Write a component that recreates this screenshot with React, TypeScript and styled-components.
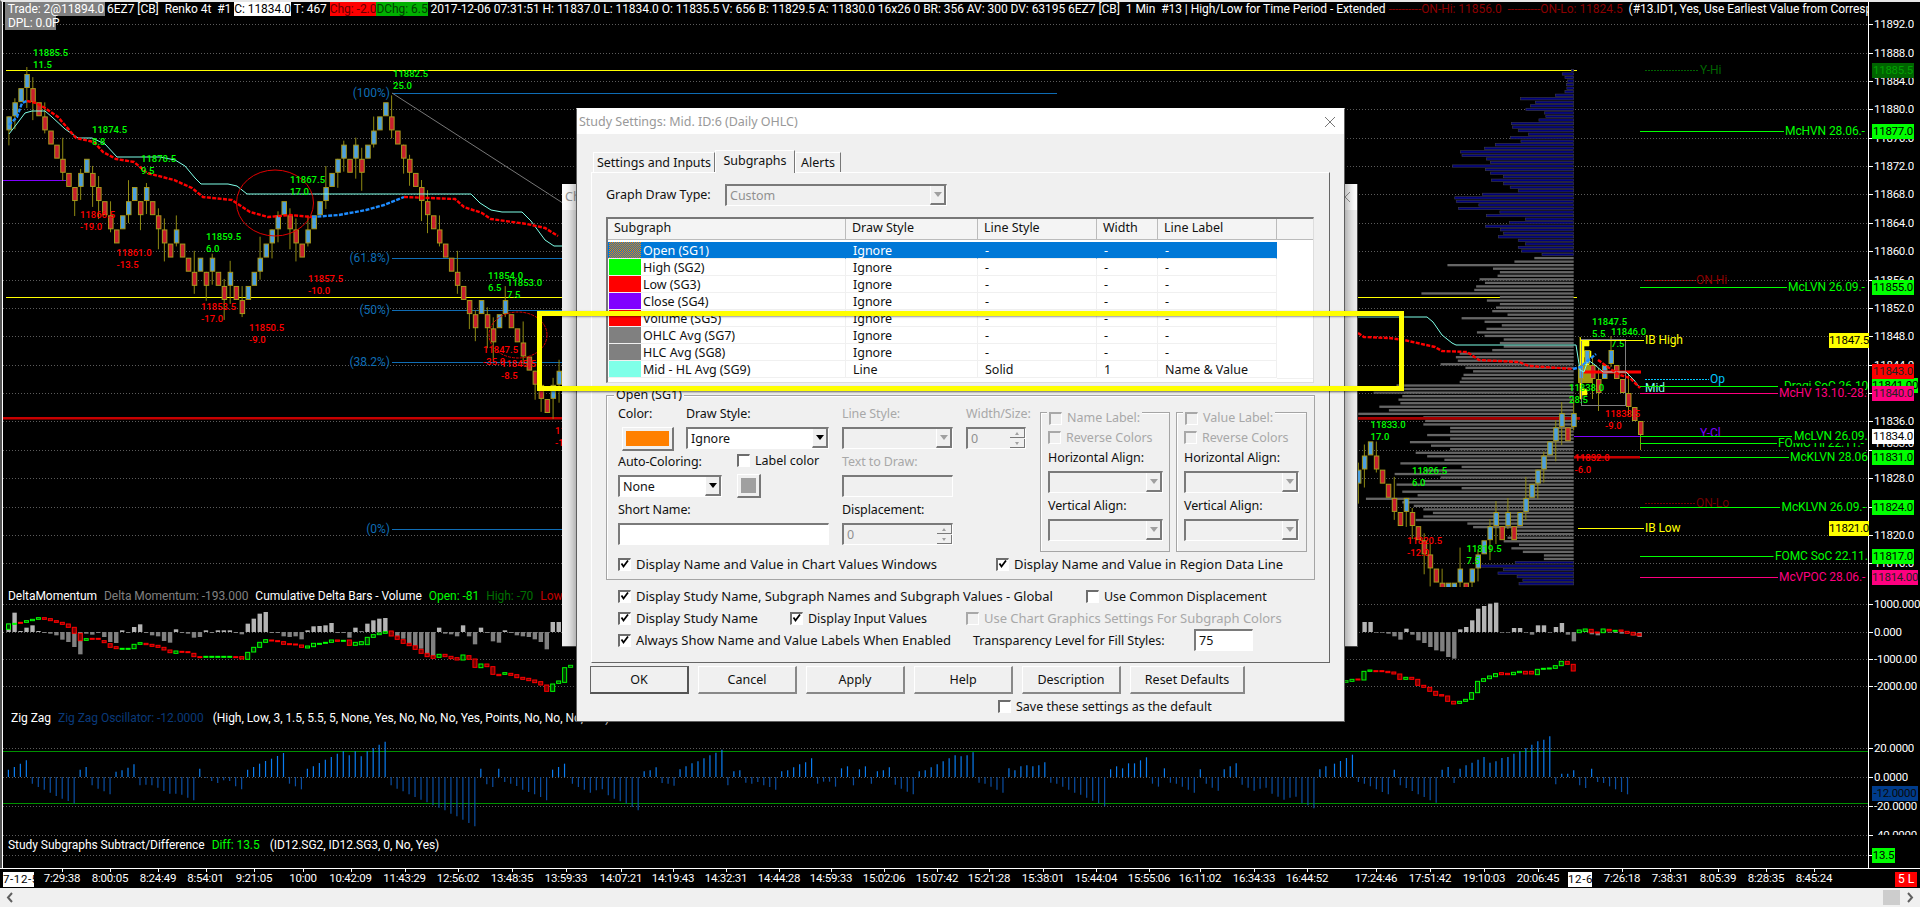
import React from "react";
import styled, { createGlobalStyle } from "styled-components";

const Global = createGlobalStyle`
  html, body { margin: 0; padding: 0; background: #000; overflow: hidden; }
`;

const CHART_FONT = `"Roboto", "Liberation Sans", sans-serif`;
const UI_FONT = `"Noto Sans", "Liberation Sans", sans-serif`;

const Page = styled.div`
  position: relative; width: 1920px; height: 907px; background: #000; overflow: hidden;
  display: flex; flex-direction: column; font-family: ${CHART_FONT}; color: #fff;
`;
const ChartRow = styled.div`
  display: flex; height: 868px; border-top: 2px solid #e6e6e6; box-sizing: border-box;
  border-left: 2px solid #555; background: #000;
`;
const Plot = styled.div`
  width: 1866px; border-left: 1px solid #fff; box-sizing: border-box; display: flex; flex-direction: column; overflow: hidden;
`;
const Pane = styled.section<{ $h: number }>`
  position: relative; height: ${(p) => p.$h}px; flex: none; overflow: hidden;
`;
const Canvas = styled.svg`
  position: absolute; left: 0; top: 0; display: block;
`;
const HeadLine = styled.div<{ $pad: number; $top: number }>`
  position: relative; display: flex; white-space: pre; height: 14px; line-height: 14px; font-size: 12px;
  padding-left: ${(p) => p.$pad}px; margin-top: ${(p) => p.$top}px; letter-spacing: -0.04px;
`;
const Seg = styled.span<{ $c?: string; $bg?: string; $ml?: number; $w?: number }>`
  flex: none; color: ${(p) => p.$c || "#fff"}; background: ${(p) => p.$bg || "transparent"};
  margin-left: ${(p) => p.$ml || 0}px; ${(p) => (p.$w ? `width: ${p.$w}px;` : "")}
`;
const AxisColumn = styled.div`
  position: relative; width: 52px; flex: none; border-left: 1px solid #fff; box-sizing: border-box; background: #000;
`;
const AxisText = styled.div<{ $clip?: boolean }>`
  position: absolute; left: 5px; height: ${(p) => (p.$clip ? 7 : 14)}px; overflow: hidden; line-height: 14px;
  font-size: 11.5px; letter-spacing: -0.25px; white-space: nowrap;
`;
const AxisTick = styled.i`
  position: absolute; left: 0; width: 4px; height: 1px; background: #fff;
`;
const AxisTag = styled.div<{ $bg: string; $fg: string; $left: number; $w: number }>`
  position: absolute; left: ${(p) => p.$left}px; width: ${(p) => p.$w}px; height: 15px; line-height: 15px; box-sizing: border-box;
  background: ${(p) => p.$bg}; color: ${(p) => p.$fg}; font-size: 11.5px; letter-spacing: -0.25px; text-align: center; white-space: nowrap; overflow: hidden;
`;
const TimeAxis = styled.div`
  position: relative; height: 20px; flex: none; box-sizing: border-box; border-top: 1px solid #fff; background: #000;
`;
const TimeTick = styled.i`
  position: absolute; top: 0; width: 1px; height: 3px; background: #fff;
`;
const TimeLabel = styled.span`
  position: absolute; top: 2px; line-height: 15px; transform: translateX(-50%); font-size: 11.5px; letter-spacing: -0.2px; white-space: nowrap;
`;
const DateTag = styled.span<{ $w: number }>`
  position: absolute; top: 3px; height: 15px; width: ${(p) => p.$w}px; line-height: 15px; background: #fff; color: #000; font-size: 11.5px; letter-spacing: 0.6px; text-align: center; white-space: nowrap;
`;
const StatusTag = styled.span`
  position: absolute; top: 3px; left: 1895px; width: 22px; height: 15px; line-height: 15px; background: #f00; color: #fff; font-size: 12px; text-align: center;
`;
const ScrollBar = styled.div`
  height: 19px; flex: none; background: #f0f0f0; display: flex; align-items: center; justify-content: space-between; padding: 0 6px 0 6px;
`;
const ScrollEnd = styled.div`
  display: flex; align-items: center; gap: 6px;
`;
const ScrollThumb = styled.div`
  width: 17px; height: 15px; background: #cdcdcd;
`;

const BackDialog = styled.div`
  position: absolute; left: 562px; top: 184px; width: 796px; height: 463px; background: #f0f0f0;
  border: 1px solid #4a4a4a; border-width: 0 1px 1px 0; box-sizing: border-box; font-family: ${UI_FONT};
`;
const BackTitle = styled.div`
  height: 26px; background: #fff; color: #999; font-size: 12.5px; line-height: 26px; padding-left: 3px;
  display: flex; justify-content: space-between; align-items: center; padding-right: 6px;
`;
const Dialog = styled.div`
  position: absolute; left: 576px; top: 108px; width: 769px; height: 614px; box-sizing: border-box; background: #f0f0f0;
  border: 1px solid #5f5f5f; border-top: 1px solid #fff; box-shadow: 0 0 12px rgba(0, 0, 0, 0.5);
  font-family: ${UI_FONT}; font-size: 12.5px; color: #111; letter-spacing: -0.02px;
  display: flex; flex-direction: column;
`;
const TitleBar = styled.div`
  height: 25px; flex: none; background: #fff; color: #999; display: flex; align-items: center; justify-content: space-between;
  padding: 0 8px 0 2px; font-size: 12.5px;
`;
const Tabs = styled.div`
  display: flex; align-items: flex-end; margin: 15px 0 0 16px; height: 23px; flex: none; position: relative;
`;
const Tab = styled.div<{ $active?: boolean; $w: number }>`
  width: ${(p) => p.$w}px; height: ${(p) => (p.$active ? 23 : 20)}px; box-sizing: border-box; text-align: center;
  line-height: ${(p) => (p.$active ? 20 : 19)}px; border: 1px solid #fff; border-bottom: none; border-right: 1px solid #777;
  background: #f0f0f0; position: relative; margin-bottom: ${(p) => (p.$active ? -1 : 0)}px; z-index: ${(p) => (p.$active ? 2 : 0)};
`;
const TabPanel = styled.div`
  margin-left: 14px; width: 739px; height: 491px; flex: none; box-sizing: border-box; border: 1px solid #fff; border-right: 1px solid #666; border-bottom: 1px solid #666;
  padding: 10px 0 0 14px; display: flex; flex-direction: column;
`;
const TypeRow = styled.div`
  display: flex; align-items: center; height: 23px; gap: 7px;
`;
const TypeLabel = styled.span`
  width: 112px;
`;
const COLS = "238px 132px 119px 61px 119px 1fr";
const List = styled.div`
  margin-top: 11px; width: 708px; height: 166px; flex: none; background: #fff; box-sizing: border-box;
  border: 1px solid #777; border-top-width: 2px; border-left-width: 2px; border-right-color: #ddd; border-bottom-color: #ddd;
`;
const ListHead = styled.div`
  display: grid; grid-template-columns: ${COLS}; height: 20px; background: #f4f4f4; border-bottom: 1px solid #bbb;
`;
const HeadCell = styled.div`
  line-height: 18px; padding-left: 6px; border-right: 1px solid #bbb; box-sizing: border-box;
  &:last-child { border-right: 0; }
`;
const ListBody = styled.div`
  padding-top: 2px;
`;
const ListRow = styled.div`
  display: grid; grid-template-columns: ${COLS}; height: 17px;
`;
const ListCell = styled.div<{ $sel?: boolean; $first?: boolean }>`
  display: flex; align-items: center; height: 17px; box-sizing: border-box; overflow: hidden; white-space: nowrap;
  padding-left: ${(p) => (p.$first ? 1 : 7)}px; background: ${(p) => (p.$sel ? "#0078d7" : "#fff")}; color: ${(p) => (p.$sel ? "#fff" : "#111")};
  border-bottom: 1px solid #f0f0f0; border-right: 1px solid ${(p) => (p.$sel ? "#0078d7" : "#f0f0f0")};
`;
const Swatch = styled.span<{ $c: string; $dither?: boolean }>`
  width: 32px; height: 16px; margin-right: 2px; flex: none;
  background: ${(p) => (p.$dither ? "repeating-conic-gradient(#ff8000 0 25%, #0078d7 0 50%) 0 0 / 2px 2px" : p.$c)};
`;
const TrailCell = styled.div`
  height: 17px; background: #fff; border-bottom: 1px solid #f0f0f0;
`;
const Group = styled.div`
  position: relative; margin-top: 12px; width: 709px; height: 185px; flex: none; box-sizing: border-box;
  border: 1px solid #a5a5a5; box-shadow: inset 1px 1px 0 #fff; padding: 8px 0 0 11px;
`;
const Legend = styled.span<{ $left: number; $top: number; $dim?: boolean }>`
  position: absolute; left: ${(p) => p.$left}px; top: ${(p) => p.$top}px; background: #f0f0f0; padding: 0 2px; line-height: 14px; height: 14px;
  display: flex; align-items: center; gap: 5px; color: ${(p) => (p.$dim ? "#a8a8a8" : "#111")}; white-space: nowrap;
`;
const GroupTop = styled.div`
  display: flex; height: 149px;
`;
const Col = styled.div<{ $w: number; $ml?: number }>`
  width: ${(p) => p.$w}px; margin-left: ${(p) => p.$ml || 0}px; flex: none; display: flex; flex-direction: column;
`;
const FieldRow = styled.div`
  display: flex; height: 48px;
`;
const Field = styled.div<{ $w: number; $ml?: number }>`
  width: ${(p) => p.$w}px; margin-left: ${(p) => p.$ml || 0}px; flex: none; display: flex; flex-direction: column; height: 48px;
`;
const FieldLabel = styled.div<{ $dim?: boolean }>`
  height: 20px; line-height: 20px; margin-bottom: 3px; color: ${(p) => (p.$dim ? "#a8a8a8" : "#111")}; white-space: nowrap; letter-spacing: -0.1px;
`;
const Sunken = styled.div<{ $dim?: boolean }>`
  height: 22px; box-sizing: border-box; position: relative; display: flex; align-items: center; padding-left: 3px;
  background: ${(p) => (p.$dim ? "#f0f0f0" : "#fff")}; color: ${(p) => (p.$dim ? "#909090" : "#111")};
  border: 1px solid #fff; border-top: 2px solid #7a7a7a; border-left: 2px solid #7a7a7a;
`;
const DropBtn = styled.div<{ $dim?: boolean }>`
  position: absolute; right: 0; top: 0; bottom: 0; width: 16px; background: #f0f0f0; box-sizing: border-box;
  border-left: 1px solid #fff; border-right: 2px solid #7a7a7a; border-bottom: 2px solid #7a7a7a; display: flex; align-items: center; justify-content: center;
  &::after { content: ""; border: 4px solid transparent; border-top: 5px solid ${(p) => (p.$dim ? "#a0a0a0" : "#000")}; border-bottom: 0; }
`;
const SpinBtns = styled.div`
  position: absolute; right: 0; top: 0; bottom: 0; width: 15px; display: flex; flex-direction: column; gap: 1px; box-sizing: border-box;
`;
const SpinBtn = styled.div<{ $up?: boolean }>`
  flex: 1; background: #f0f0f0; border-right: 1px solid #7a7a7a; border-bottom: 1px solid #7a7a7a; display: flex; align-items: center; justify-content: center;
  &::after { content: ""; border: 2px solid transparent; ${(p) => (p.$up ? "border-bottom: 3px solid #a0a0a0; border-top: 0;" : "border-top: 3px solid #a0a0a0; border-bottom: 0;")} }
`;
const ColorBtn = styled.div<{ $w: number; $h: number; $mt: number; $ml: number; $c: string; $px: number; $py: number }>`
  width: ${(p) => p.$w}px; height: ${(p) => p.$h}px; margin-top: ${(p) => p.$mt}px; margin-left: ${(p) => p.$ml}px; box-sizing: border-box; flex: none;
  border: 1px solid #fff; border-right: 2px solid #777; border-bottom: 2px solid #777; padding: ${(p) => `${p.$py}px ${p.$px}px`};
  &::before { content: ""; display: block; width: 100%; height: 100%; background: ${(p) => p.$c}; }
`;
const CheckRow = styled.label<{ $w?: number; $dim?: boolean; $ml?: number; $big?: boolean }>`
  display: flex; align-items: center; gap: 5px; white-space: nowrap; flex: none; ${(p) => (p.$w ? `width: ${p.$w}px;` : "")}
  margin-left: ${(p) => p.$ml || 0}px; color: ${(p) => (p.$dim ? "#a8a8a8" : "#111")}; font-size: ${(p) => (p.$big ? 13 : 12.5)}px;
`;
const Box = styled.span<{ $dim?: boolean }>`
  width: 13px; height: 13px; box-sizing: border-box; flex: none; display: block; background: ${(p) => (p.$dim ? "#f0f0f0" : "#fff")};
  border-top: 2px solid ${(p) => (p.$dim ? "#a8a8a8" : "#6d6d6d")}; border-left: 2px solid ${(p) => (p.$dim ? "#a8a8a8" : "#6d6d6d")};
  border-right: 1px solid #fff; border-bottom: 1px solid #fff;
`;
const LabelBox = styled.div<{ $w: number; $ml: number }>`
  position: relative; width: ${(p) => p.$w}px; margin-left: ${(p) => p.$ml}px; margin-top: 8px; height: 140px; box-sizing: border-box; flex: none;
  border: 1px solid #a5a5a5; box-shadow: inset 1px 1px 0 #fff; padding: 17px 0 0 7px;
`;
const BoxCheck = styled.div`
  height: 15px; display: flex; align-items: center; margin-bottom: 2px;
`;
const BoxField = styled.div`
  margin-top: 3px; width: 115px;
`;
const GroupFoot = styled.div`
  display: flex; height: 20px; align-items: center; margin-top: 1px;
`;
const Options = styled.div`
  padding: 5px 0 0 12px; display: flex; flex-direction: column;
`;
const OptionRow = styled.div`
  display: flex; align-items: center; height: 22px;
`;
const InputBox = styled(Sunken)`
  width: 59px;
`;
const PlainText = styled.span<{ $w: number }>`
  width: ${(p) => p.$w}px; flex: none; white-space: nowrap;
`;
const ButtonRow = styled.div`
  display: flex; margin: 3px 0 0 13px; gap: 9px; flex: none;
`;
const Btn = styled.div<{ $w: number; $main?: boolean }>`
  width: ${(p) => p.$w}px; height: 28px; box-sizing: border-box; text-align: center; line-height: 25px;
  border: 1px solid ${(p) => (p.$main ? "#666" : "#fff")}; border-right: 2px solid ${(p) => (p.$main ? "#555" : "#888")}; border-bottom: 2px solid ${(p) => (p.$main ? "#555" : "#888")};
`;
const SaveRow = styled.div`
  margin: 4px 0 0 421px; height: 16px; display: flex; align-items: center; flex: none;
`;
const Highlight = styled.div`
  position: absolute; left: 537px; top: 311px; width: 867px; height: 80px; box-sizing: border-box; border: 5px solid #ffff00;
  box-shadow: 0 1px 2px rgba(0, 0, 0, 0.6), inset 0 1px 2px rgba(0, 0, 0, 0.4);
`;

const ChartLabel = styled.text`
  font-family: ${CHART_FONT}; font-size: 9.5px; font-weight: 500; dominant-baseline: central;
`;
const FibLabel = styled.text`
  font-family: ${CHART_FONT}; font-size: 12px; dominant-baseline: central; text-anchor: end; fill: #0f6db5;
`;
const LineLabel = styled.text`
  font-family: ${CHART_FONT}; font-size: 12px; letter-spacing: -0.1px; dominant-baseline: central;
`;

const W = 1866;
const bars: number[] = [3,2,1,0,1,2,3,4,5,6,7,8,7,6,7,8,9,10,11,10,9,8,9,8,9,10,11,12,11,12,13,14,13,14,13,14,15,14,15,16,15,14,13,12,11,10,9,10,11,12,11,10,9,8,7,6,5,6,5,6,5,4,3,2,3,4,5,6,7,8,9,10,11,12,13,14,15,16,17,16,17,18,17,16,17,18,19,20,21,22,23,22,21];
const barsR: number[] = [28,27,26,27,28,29,30,31,30,31,32,33,34,35,36,36,36,35,36,35,34,33,32,31,32,31,32,31,30,29,28,27,26,25,24,25,24];
const kY = (k: number) => 74 + 14.13 * k;
const cluster: [number, number, boolean][] = [
  [1581, 365, true],[1587, 350, true],[1592.5, 365, false],[1598.5, 379, false],[1604.5, 365, true],[1611, 350, true],
  [1616.5, 365, false],[1622.5, 379, false],[1628.5, 393, false],[1634.5, 407, false],[1640.5, 421, false],
];
const profA = [657,633,640,647,644,645,640,615,524,563,550,538,587,590,572,500,503,518,545,498,525,458,430,367,371,435,445,346,432,445,480,448,480,497,518,424,352,356,415,362,470,435,537,495,432,472,480,466,518,537,518,527,580,560,508,333,452,470,464,417,431,408,403,265,470];
const profB = [436,470,460,450,490,370,430,475,435,410,430,480,470,480,450,365,355,360,315,380,400,375,370,365,200,190,140,215,205,210,155,180,100,270,275,270,340,340,280,340,235,290,340,250,280,325,210,370,275,195,315,270,200,370,215,255,120,215,245,270,295,270,250,385,400,500,510,490,480,520,500,530,585,585,510,420,480,465,515,530,520];

const histL = [25,58,3,13,20,3,-3,-5,-10,-23,-30,-45,-67,-5,-8,-3,-15,-30,-33,5,-3,15,23,-3,-10,-13,-27,-32,8,-3,-5,-17,-15,5,-3,5,5,5,-3,-7,25,40,55,60,-3,-3,-13,-15,-13,-22,5,17,18,20,27,-3,-3,-17,13,2,25,35,40,42,-3,-13,-20,-35,-48,-50,-73,-75,13,-5,-7,-13,20,-13,-37,13,-3,-28,-32,5,-3,-10,-13,-15,-22,-30,-52,30,30];
const histR = [30,30,-2,-2,-5,-13,-23,10,-8,-25,-33,-45,-55,-58,-75,-80,8,15,35,70,78,85,88,-2,-2,12,12,-2,-8,20,20,-2,15,27,-8,-28,3,5,-7,-10,5,-2,-3,-5,-3,-10,-15];
type C = [number, number, number];
const candL: C[] = [[72,88,1],[70,73,1],[67,68,0],[62,67,1],[58,62,1],[53,58,1],[53,58,0],[56,62,0],[62,67,0],[67,73,0],[72,82,0],[82,100,0],[100,122,0],[116,121,1],[115,117,0],[115,118,0],[122,128,0],[131,142,0],[140,146,0],[145,146,1],[145,146,1],[133,146,1],[128,133,1],[130,134,0],[133,139,0],[136,142,0],[142,150,0],[150,158,0],[153,160,1],[154,156,0],[155,158,0],[160,170,0],[170,172,0],[169,170,1],[169,170,1],[169,170,1],[169,171,1],[169,170,1],[170,171,0],[170,177,0],[157,178,1],[142,156,1],[127,142,1],[119,127,1],[120,122,0],[122,124,0],[125,133,0],[131,133,0],[132,135,0],[135,142,0],[138,144,1],[130,140,1],[130,132,1],[127,130,1],[120,127,1],[120,124,0],[121,123,1],[120,136,0],[127,136,1],[125,134,1],[112,134,1],[104,112,1],[99,104,1],[95,100,1],[93,108,0],[108,118,0],[119,130,0],[130,137,0],[137,148,0],[148,160,0],[160,170,0],[167,175,0],[163,172,1],[163,170,0],[169,176,0],[173,180,0],[165,180,1],[167,178,0],[177,202,0],[192,203,1],[192,200,0],[200,223,0],[223,227,0],[218,223,1],[220,226,0],[224,233,0],[232,238,0],[235,242,0],[240,248,0],[245,255,0],[255,274,0],[252,274,1],[243,250,1],[203,247,1],[196,202,1]];
const candR: C[] = [[242,247,1],[238,244,1],[237,240,0],[214,240,1],[210,214,1],[212,214,0],[212,214,0],[214,218,0],[216,222,0],[222,238,0],[232,238,1],[232,238,0],[238,256,0],[256,262,0],[262,274,0],[274,286,0],[284,288,0],[288,304,0],[304,312,0],[304,310,1],[298,304,1],[278,298,1],[244,278,1],[236,244,1],[228,236,1],[221,230,1],[218,224,0],[220,224,0],[217,224,1],[214,218,1],[214,222,0],[214,222,0],[208,224,1],[205,208,1],[204,206,1],[197,205,1],[184,197,1],[184,193,0],[193,213,0],[90,98,1],[87,94,1],[88,98,0],[96,98,0],[87,98,1],[88,93,0],[91,94,1],[90,94,0],[94,100,0],[97,105,0],[101,107,0]];
const zzL = [22,30,40,50,-20,-30,-38,-47,-57,-65,-72,-80,22,30,-25,-35,-43,-52,16,20,28,38,-25,-23,-25,-32,-42,-50,-50,-53,-62,-70,25,-3,-12,-18,-10,-12,-28,-37,22,30,40,48,55,63,72,-20,-28,-37,25,32,42,52,60,70,77,65,77,62,77,87,97,106,-25,-35,-43,-52,-60,-68,-76,-85,-92,-100,-110,-118,-128,-138,-148,25,-22,-30,25,-15,-20,-27,-38,-45,-52,-60,-70,22,30,40];
const zzM = [-20,-30,-38,-47,-40,-37,-55,-65,-73,-80,-90,-100,17,20,29,-18,-20,-26,23,32,41,47,56,65,73,82,-25,17,20,-17,-20,-15,-25,-30,-38,17,20,29,38,44,56,-20,-14,-14,-29,26,32,-25,23,32,-20,17,20,29,-23,-35,-44,-52,17,20,29,38,47,56,65,62,65,74,-17,-20,-29,-38,-47,26,20,32,35,32,35,44,-17,-20,-29,-38,-47,-53,-62,-71,-79,-88,23,32,26,41,41,50,59,-20,-29,26,-17,-20,-29,-38,-47,23,-20,-32,-41,23,32,41,-23,-32,-41,-35,-32,-50,-59,-68,-62,-59,-79,-85,-94,23,32];
const zzR = [40,48,57,67,-15,-20,-28,-37,-45,-52,22,-25,-33,-42,-52,-60,-70,-77,22,30,-18,25,35,43,52,60,43,47,57,60,70,77,87,97,107,112,122,-22,10,10,20,-25,-33,25,-15,-18,-28,-37,-45,-52];

const pts = (a: number[][]) => a.map((p) => p.join(",")).join(" ");
const cyanL = [[9,134],[16,125],[25,113],[32,111],[45,111],[52,117],[65,129],[78,138],[92,138],[105,144],[117,157],[160,157],[175,160],[185,166],[195,178],[201,184],[228,184],[237,186],[247,194],[471,194],[480,203],[491,210],[502,212],[522,212],[531,221],[545,240],[554,246],[562,246]];
const cyanR = [[1358,317],[1427,317],[1433,322],[1442,335],[1452,343],[1456,345],[1576,345],[1580,370],[1584,372],[1588,360],[1595,365],[1603,372],[1626,372],[1634,380],[1640,388]];
const maBlue0 = [[9,125],[17,117],[22,103],[27,101]];
const maRed1 = [[27,101],[36,103],[45,108],[58,117],[76,138],[94,142],[103,152],[116,159],[134,162],[147,173],[174,180],[192,188],[203,197],[232,200],[250,212],[268,217],[290,215],[312,217]];
const maBlue1 = [[312,217],[339,215],[366,210],[384,205],[404,197]];
const maRed2 = [[404,197],[455,199],[464,207],[482,213],[491,219],[527,224],[545,228],[558,236]];
const maRed3 = [[1358,333],[1364,337],[1389,338],[1404,340],[1435,347],[1442,351],[1467,352],[1479,360],[1519,362],[1529,366],[1573,369]];
const maBlue3 = [[1573,369],[1581,367],[1586,362],[1596,354]];
const maRed4 = [[1598,360],[1612,370],[1620,375],[1630,378],[1640,388]];

const GridLines = ({ ys }: { ys: number[] }) => (
  <g stroke="#5c5c5c" strokeDasharray="1 2">
    {ys.map((y) => (
      <line key={y} x1={3} x2={1868} y1={y + 0.5} y2={y + 0.5} />
    ))}
  </g>
);

const Wick = ({ i, x, top }: { i: number; x: number; top: number }) => {
  const h = (i * 37) % 11;
  if (h > 5) return null;
  const up = (h * 7) % 24;
  const dn = ((h + 3) * 5) % 22;
  return <line x1={x} x2={x} y1={top - up} y2={top + 14 + dn} stroke="#8f8a12" />;
};
const Brick = ({ x, top, up }: { x: number; top: number; up: boolean }) => (
  <rect x={x - 2} y={top + 0.5} width={4.5} height={13} fill={up ? "#4a9fe0" : "#c81e2e"} stroke="#a89a1c" />
);

const G = "#00ff00";
const R = "#ff0000";
const pairs: [number, number, string, string, string][] = [
  [33,52,"11885.5","11.5",G],[92,129,"11874.5","8.8",G],[141,158,"11870.5","9.5",G],[290,179,"11867.5","17.0",G],
  [206,236,"11859.5","6.0",G],[393,73,"11882.5","25.0",G],[488,275,"11854.0","6.5",G],[507,282,"11853.0","7.5",G],
  [80,214,"11866.5","-19.0",R],[116.5,252,"11861.0","-13.5",R],[308,278,"11857.5","-10.0",R],[201,306,"11853.5","-17.0",R],
  [249,327,"11850.5","-9.0",R],[483,349,"11847.5","-35.0",R],[501,363,"11845.5","-8.5",R],[555,430,"11843.0","-12.0",R],
  [1592,321,"11847.5","5.5",G],[1611,331,"11846.0","7.5",G],[1569,387,"11838.0","28.5",G],[1605,413,"11838.5","-9.0",R],
  [1574.5,457,"11832.0","-6.0",R],[1370.5,424,"11833.0","17.0",G],[1412,470,"11826.5","6.0",G],[1407,540,"11820.5","-12.0",R],[1466.5,548,"11819.5","7.5",G],
];
const fibs: [number, string][] = [[93,"(100%)"],[258,"(61.8%)"],[310,"(50%)"],[362,"(38.2%)"],[529,"(0%)"]];
type LL = [number, number, number, string, string, number];
const levelLines: LL[] = [
  [131,1784,1785,"McHVN 28.06.-",G,0],[287,1787,1788,"McLVN 26.09.-",G,0],[386,1778,1784,"Dragi SoC 26.10.-",G,0],
  [443,1777,1778,"FOMC Hi 22.11.-",G,0],[393,1778,1779,"McHV 13.10.-28.","#ff0080",1],[436,1792,1794,"McLVN 26.09.",G,1],
  [457,1789,1790,"McKLVN 28.06",G,1],[507,1780,1781.5,"McKLVN 26.09.-",G,1],[556,1773.5,1775,"FOMC SoC 22.11.",G,1],[577,1778,1779,"McVPOC 28.06.-","#ff0080",1],
];
const dashLevels: [number, number, string, string][] = [
  [70,1699,"Y-Hi","#006400"],[280,1695,"ON-Hi","#8b0000"],[503,1695,"ON-Lo","#700000"],[379,1709,"Op","#00c8ff"],
];

const MainChart = () => (
  <Canvas width={W} height={585} viewBox={`3 2 ${W} 585`}>
    <GridLines ys={[24,53,81,109,138,166,194,223,251,280,308,336,365,393,421,450,478,507,535,563]} />
    <line x1={6} x2={1577} y1={70.5} y2={70.5} stroke="#ffff00" />
    <line x1={6} x2={1577} y1={297.5} y2={297.5} stroke="#ffff00" />
    {profA.concat(profB).map((v, i) => {
      const y = 69.3 + i * 3.54;
      const x = 1320 + v / 2.613;
      const blue = i < 53 || y >= 558;
      return <rect key={i} x={x} y={y} width={1573.7 - x} height={2.3} fill={blue ? "#00007c" : "#666"} stroke={blue ? "#3c3c4c" : "none"} strokeWidth={0.6} />;
    })}
    <line x1={3} x2={66} y1={180.5} y2={180.5} stroke="#8000ff" />
    <rect x={3} y={417} width={1577} height={2.5} fill="#c80000" />
    <rect x={1358} y={417} width={222} height={2.5} fill="#a80000" />
    <line x1={1574} x2={1640} y1={436.5} y2={436.5} stroke="#8000ff" />
    <rect x={1574} y={456} width={66} height={2.5} fill="#c80000" />
    {fibs.map(([y, t]) => (
      <g key={t}>
        <line x1={392} x2={1057} y1={y + 0.5} y2={y + 0.5} stroke="#0f6db5" />
        <FibLabel x={390} y={y}>{t}</FibLabel>
      </g>
    ))}
    <line x1={392} y1={93} x2={760} y2={330} stroke="#777" />
    {bars.map((k, i) => (
      <Wick key={i} i={i} x={8.9 + 5.98 * i} top={kY(k)} />
    ))}
    {barsR.map((k, i) => (
      <Wick key={i} i={i + 3} x={1358.4 + 5.98 * i} top={kY(k)} />
    ))}
    {cluster.map(([x, y], i) => (
      <Wick key={i} i={i + 1} x={x} top={y} />
    ))}
    {bars.map((k, i) => (
      <Brick key={i} x={8.9 + 5.98 * i} top={kY(k)} up={i === 0 || k < bars[i - 1]} />
    ))}
    {barsR.map((k, i) => (
      <Brick key={i} x={1358.4 + 5.98 * i} top={kY(k)} up={i === 0 || k <= barsR[i - 1]} />
    ))}
    <path d="M1581 340h8v6h-5v5h7v6h-7v7h5v6h-6v6h6v5h-7v8h5v6h-5v4h-2v-62z" fill="#ffff00" stroke="#ffff00" strokeWidth={0.6} />
    <rect x={1578} y={365} width={14} height={18} fill="#a09a10" />
    {cluster.map(([x, y, up], i) => (
      <Brick key={i} x={x} top={y} up={up} />
    ))}
    <rect x={1581.5} y={339.5} width={44} height={66} fill="none" stroke="#808080" />
    <rect x={1584} y={370.5} width={57} height={3} fill="#ff0000" />
    <polyline points={pts(cyanL)} fill="none" stroke="#7fffe8" />
    <polyline points={pts(cyanR)} fill="none" stroke="#7fffe8" />
    <g fill="none" strokeWidth={2.4} strokeDasharray="4 1.4">
      <polyline points={pts(maBlue0)} stroke="#1e8cff" />
      <polyline points={pts(maRed1)} stroke="#f00" />
      <polyline points={pts(maBlue1)} stroke="#1e8cff" />
      <polyline points={pts(maRed2)} stroke="#f00" />
      <polyline points={pts(maRed3)} stroke="#f00" />
      <polyline points={pts(maBlue3)} stroke="#1e8cff" />
      <polyline points={pts(maRed4)} stroke="#f00" />
    </g>
    <ellipse cx={275} cy={203} rx={38.5} ry={33} fill="none" stroke="#e00000" />
    <ellipse cx={518} cy={335} rx={29} ry={23} fill="none" stroke="#e00000" strokeDasharray="3 1" />
    {pairs.map(([x, y, a, b, c]) => (
      <g key={a + x} fill={c}>
        <ChartLabel x={x} y={y}>{a}</ChartLabel>
        <ChartLabel x={x} y={y + 12}>{b}</ChartLabel>
      </g>
    ))}
    <line x1={1578} x2={1644} y1={528.5} y2={528.5} stroke="#ffff00" />
    <line x1={1580} x2={1644} y1={340.5} y2={340.5} stroke="#ffff00" />
    <LineLabel x={1645} y={340} fill="#ffff00">IB High</LineLabel>
    <LineLabel x={1645} y={528} fill="#ffff00">IB Low</LineLabel>
    <LineLabel x={1645} y={388} fill="#7fffe8">Mid</LineLabel>
    <line x1={1645} x2={1699} y1={436.5} y2={436.5} stroke="#8000ff" strokeDasharray="2 1" />
    <LineLabel x={1700} y={433} fill="#7a00ff">Y-Cl</LineLabel>
    {dashLevels.map(([y, x2, t, c]) => (
      <g key={t}>
        <line x1={1645} x2={x2} y1={y + 0.5} y2={y + 0.5} stroke={c} strokeDasharray="2 1" />
        <LineLabel x={x2 + 1} y={y} fill={c}>{t}</LineLabel>
      </g>
    ))}
    {levelLines.map(([y, x2, tx, t, c, bg]) => (
      <g key={t}>
        <line x1={1640} x2={x2} y1={y + 0.5} y2={y + 0.5} stroke={c} />
        {bg ? <rect x={tx - 1} y={y - 7} width={1866 - tx} height={14} fill="#000" /> : null}
        <LineLabel x={tx} y={y} fill={c}>{t}</LineLabel>
      </g>
    ))}
  </Canvas>
);

const DeltaChart = () => (
  <Canvas width={W} height={121} viewBox={`3 587 ${W} 121`}>
    <GridLines ys={[604,632,659,686]} />
    {histL.map((v, i) => (
      <rect key={i} x={6.4 + 5.98 * i} y={v > 0 ? 632 - v / 3 : 632} width={4.4} height={Math.abs(v) / 3} fill={v > 0 ? "#b4b4b4" : "#808080"} />
    ))}
    {histR.map((v, i) => (
      <rect key={i} x={1362.4 + 5.98 * i} y={v > 0 ? 632 - v / 3 : 632} width={4.4} height={Math.abs(v) / 3} fill={v > 0 ? "#b4b4b4" : "#808080"} />
    ))}
    {candL.map(([t, b, g], i) => (
      <rect key={i} x={6.5 + 5.98 * i} y={600 + t / 3} width={4} height={Math.max(1, (b - t) / 3)} fill={g ? "#003c00" : "#7a0000"} stroke={g ? "#00ff00" : "#ff0000"} />
    ))}
    {candR.map(([t, b, g], i) => (
      <rect key={i} x={1344 + 5.98 * i} y={600 + t / 3} width={4} height={Math.max(1, (b - t) / 3)} fill={g ? "#003c00" : "#7a0000"} stroke={g ? "#00ff00" : "#ff0000"} />
    ))}
  </Canvas>
);

const zzBar = (key: string, x: number, v: number) => (
  <line key={key} x1={x} x2={x} y1={777} y2={777 - v / 3} stroke={v > 0 ? "#0a7cf0" : "#0b4ea2"} strokeWidth={1.2} />
);
const ZigZagChart = () => (
  <Canvas width={W} height={129} viewBox={`3 708 ${W} 129`}>
    <GridLines ys={[748,777,806,835]} />
    <line x1={3} x2={1868} y1={751.5} y2={751.5} stroke="#009000" />
    <line x1={3} x2={1868} y1={803.5} y2={803.5} stroke="#009000" />
    {zzL.map((v, i) => (8.4 + 5.98 * i < 570 ? zzBar(`l${i}`, 8.4 + 5.98 * i, v) : null))}
    {zzM.map((v, i) => zzBar(`m${i}`, 572.4 + 5.98 * i, v))}
    {zzR.map((v, i) => zzBar(`r${i}`, 1334.5 + 5.98 * i, v))}
  </Canvas>
);
const DiffChart = () => (
  <Canvas width={W} height={31} viewBox={`3 837 ${W} 31`}>
    <GridLines ys={[855]} />
  </Canvas>
);

type Ax = [number, string, boolean?];
const axisPlain: Ax[] = [
  [24,"11892.0"],[53,"11888.0"],[81,"11884.0"],[109,"11880.0"],[138,"11876.0"],[166,"11872.0"],[194,"11868.0"],[223,"11864.0"],[251,"11860.0"],[280,"11856.0"],
  [308,"11852.0"],[336,"11848.0"],[365,"11844.0"],[393,"11840.0"],[421,"11836.0"],[443,"11833.0"],[478,"11828.0"],[535,"11820.0"],[563,"11816.0"],
  [604,"1000.000"],[632,"0.000"],[659,"-1000.00"],[686,"-2000.00"],[748,"20.0000"],[777,"0.0000"],[806,"-20.0000"],[835,"-40.0000",true],
];
const axisTicks = [24,53,81,109,138,166,194,223,251,280,308,336,365,393,421,450,478,507,535,563,604,632,659,686,748,777,806,835,855];
type Tg = [number, string, string, string, number, number];
const axisTags: Tg[] = [
  [70,"11885.5","#006400","#00a000",3,42],[131,"11877.0","#00ff00","#000",3,42],[287,"11855.0","#00ff00","#000",3,42],
  [340,"11847.5","#ffff00","#000",-40,40],[385,"11841.00","#00ff00","#000",3,46],[371,"11843.0","#ff0000","#222",3,42],[393,"11840.0","#ff0080","#222",3,42],
  [436,"11834.0","#fff","#000",3,42],[457,"11831.0","#00ff00","#000",3,42],[507,"11824.0","#00ff00","#000",3,42],[528,"11821.0","#ffff00","#000",-40,40],
  [556,"11817.0","#00ff00","#000",3,42],[577,"11814.00","#ff0080","#222",3,46],[793,"-12.0000","#003c8c","#0a0a0a",3,46],[855,"13.5","#00ff00","#000",3,23],
];
const times: [number, string][] = [
  [62,"7:29:38"],[110,"8:00:05"],[158,"8:24:49"],[205.5,"8:54:01"],[254,"9:21:05"],[303,"10:00"],[350.5,"10:42:09"],[404.5,"11:43:29"],[458,"12:56:02"],[512,"13:48:35"],[566,"13:59:33"],
  [621,"14:07:21"],[673,"14:19:43"],[726,"14:32:31"],[779,"14:44:28"],[831,"14:59:33"],[884,"15:02:06"],[937,"15:07:42"],[989,"15:21:28"],[1043,"15:38:01"],[1096,"15:44:04"],[1149,"15:55:06"],[1200,"16:11:02"],[1254,"16:34:33"],[1307,"16:44:52"],
  [1376,"17:24:46"],[1430,"17:51:42"],[1484,"19:10:03"],[1538,"20:06:45"],[1622,"7:26:18"],[1670,"7:38:31"],[1718,"8:05:39"],[1766,"8:28:35"],[1814,"8:45:24"],
];

const Check = () => (
  <svg width="9" height="9" viewBox="0 0 9 9" style={{ display: "block" }}>
    <path d="M1.5 3.5 L3.5 6.5 L8 0.5" fill="none" stroke="#000" strokeWidth={1.8} />
  </svg>
);
const CheckItem = ({ label, on, dim, w, ml, big }: { label: string; on?: boolean; dim?: boolean; w?: number; ml?: number; big?: boolean }) => (
  <CheckRow $w={w} $dim={dim} $ml={ml} $big={big}>
    <Box $dim={dim}>{on ? <Check /> : null}</Box>
    {label}
  </CheckRow>
);
const Combo = ({ value, dim }: { value?: string; dim?: boolean }) => (
  <Sunken $dim={dim}>
    {value}
    <DropBtn $dim={dim} />
  </Sunken>
);
const Spin = ({ value }: { value: string }) => (
  <Sunken $dim>
    {value}
    <SpinBtns>
      <SpinBtn $up />
      <SpinBtn />
    </SpinBtns>
  </Sunken>
);
const CloseGlyph = ({ c }: { c: string }) => (
  <svg width="12" height="12" viewBox="0 0 12 12">
    <path d="M1 1 L11 11 M11 1 L1 11" stroke={c} strokeWidth={1} fill="none" />
  </svg>
);
const rows: [string, string, string, string, string, string][] = [
  ["#808060", "Open  (SG1)", "Ignore", "-", "-", "-"],
  ["#00ff00", "High (SG2)", "Ignore", "-", "-", "-"],
  ["#ff0000", "Low (SG3)", "Ignore", "-", "-", "-"],
  ["#8000ff", "Close (SG4)", "Ignore", "-", "-", "-"],
  ["#ff0000", "Volume (SG5)", "Ignore", "-", "-", "-"],
  ["#808080", "OHLC Avg (SG7)", "Ignore", "-", "-", "-"],
  ["#808080", "HLC Avg (SG8)", "Ignore", "-", "-", "-"],
  ["#7fffe8", "Mid - HL Avg (SG9)", "Line", "Solid", "1", "Name & Value"],
];
const LabelPanel = ({ title, w, ml }: { title: string; w: number; ml: number }) => (
  <LabelBox $w={w} $ml={ml}>
    <Legend $left={6} $top={-2} $dim>
      <Box $dim />
      {title}
    </Legend>
    <BoxCheck>
      <CheckItem label="Reverse Colors" dim />
    </BoxCheck>
    <BoxField>
      <FieldLabel>Horizontal Align:</FieldLabel>
      <Combo dim />
    </BoxField>
    <BoxField>
      <FieldLabel>Vertical Align:</FieldLabel>
      <Combo dim />
    </BoxField>
  </LabelBox>
);

export default function App() {
  return (
    <Page>
      <Global />
      <ChartRow>
        <Plot>
          <Pane $h={585}>
            <MainChart />
            <HeadLine $pad={2} $top={0}>
              <Seg $bg="#808080" $w={100}> Trade: 2@11894.0</Seg>
              <Seg $ml={2}>6EZ7 [CB]  Renko 4t  #1 </Seg>
              <Seg $bg="#fff" $c="#000">C: 11834.0</Seg>
              <Seg> T: 467 </Seg>
              <Seg $bg="#f00" $c="#600">Chg: -2.0</Seg>
              <Seg $bg="#00b000" $c="#004000">DChg: 6.5</Seg>
              <Seg> 2017-12-06 07:31:51 H: 11837.0 L: 11834.0 O: 11835.5 V: 656 B: 11829.5 A: 11830.0 16x26 0 BR: 356 AV: 300 DV: 63195 6EZ7 [CB]  1 Min  #13 | High/Low for Time Period - Extended </Seg>
              <Seg $c="#8b0000">----------ON-Hi: 11856.0  ----------ON-Lo: 11824.5 </Seg>
              <Seg> (#13.ID1, Yes, Use Earliest Value from Corresponding</Seg>
            </HeadLine>
            <HeadLine $pad={2} $top={0}>
              <Seg $bg="#808080" $w={51}> DPL: 0.0P</Seg>
            </HeadLine>
          </Pane>
          <Pane $h={121}>
            <DeltaChart />
            <HeadLine $pad={5} $top={2}>
              <Seg>DeltaMomentum</Seg>
              <Seg $c="#808080" $ml={7}>Delta Momentum: -193.000</Seg>
              <Seg $ml={7}>Cumulative Delta Bars - Volume</Seg>
              <Seg $c="#00ff00" $ml={7}>Open: -81</Seg>
              <Seg $c="#007000" $ml={7}>High: -70</Seg>
              <Seg $c="#c00000" $ml={7}>Low: -193</Seg>
            </HeadLine>
          </Pane>
          <Pane $h={129}>
            <ZigZagChart />
            <HeadLine $pad={8} $top={3}>
              <Seg>Zig Zag</Seg>
              <Seg $c="#0a3a7a" $ml={7}>Zig Zag Oscillator: -12.0000</Seg>
              <Seg $ml={9}>(High, Low, 3, 1.5, 5.5, 5, None, Yes, No, No, No, Yes, Points, No, No, No, Yes)</Seg>
            </HeadLine>
          </Pane>
          <Pane $h={31}>
            <DiffChart />
            <HeadLine $pad={5} $top={1}>
              <Seg>Study Subgraphs Subtract/Difference</Seg>
              <Seg $c="#00ff00" $ml={7}>Diff: 13.5</Seg>
              <Seg $ml={10}>(ID12.SG2, ID12.SG3, 0, No, Yes)</Seg>
            </HeadLine>
          </Pane>
        </Plot>
        <AxisColumn>
          {axisTicks.map((y) => (
            <AxisTick key={y} style={{ top: y - 2 }} />
          ))}
          {axisPlain.map(([y, t, clip]) => (
            <AxisText key={t} $clip={clip} style={{ top: y - 9 }}>{t}</AxisText>
          ))}
          {axisTags.map(([y, t, bg, fg, left, w]) => (
            <AxisTag key={t} $bg={bg} $fg={fg} $left={left} $w={w} style={{ top: y - 9.5 }}>{t}</AxisTag>
          ))}
        </AxisColumn>
      </ChartRow>
      <TimeAxis>
        <DateTag $w={31} style={{ left: 3 }}>7-12-5</DateTag>
        {times.map(([x, t]) => (
          <React.Fragment key={t}>
            <TimeTick style={{ left: x }} />
            <TimeLabel style={{ left: x }}>{t}</TimeLabel>
          </React.Fragment>
        ))}
        <DateTag $w={24} style={{ left: 1568 }}>12-6</DateTag>
        <StatusTag>5 L</StatusTag>
      </TimeAxis>
      <ScrollBar>
        <svg width="8" height="11" viewBox="0 0 8 11"><path d="M6 1 L2 5.5 L6 10" stroke="#606060" strokeWidth={2} fill="none" /></svg>
        <ScrollEnd>
          <ScrollThumb />
          <svg width="8" height="11" viewBox="0 0 8 11"><path d="M2 1 L6 5.5 L2 10" stroke="#606060" strokeWidth={2} fill="none" /></svg>
        </ScrollEnd>
      </ScrollBar>

      <BackDialog>
        <BackTitle>
          Chart Settings
          <CloseGlyph c="#999" />
        </BackTitle>
      </BackDialog>

      <Dialog>
        <TitleBar>
          Study Settings: Mid. ID:6 (Daily OHLC)
          <CloseGlyph c="#777" />
        </TitleBar>
        <Tabs>
          <Tab $w={122}>Settings and Inputs</Tab>
          <Tab $w={80} $active>Subgraphs</Tab>
          <Tab $w={46}>Alerts</Tab>
        </Tabs>
        <TabPanel>
          <TypeRow>
            <TypeLabel>Graph Draw Type:</TypeLabel>
            <Col $w={222}>
              <Combo value="Custom" dim />
            </Col>
          </TypeRow>
          <List>
            <ListHead>
              <HeadCell>Subgraph</HeadCell>
              <HeadCell>Draw Style</HeadCell>
              <HeadCell>Line Style</HeadCell>
              <HeadCell>Width</HeadCell>
              <HeadCell>Line Label</HeadCell>
              <HeadCell />
            </ListHead>
            <ListBody>
              {rows.map(([c, n, d, l, w, t], i) => (
                <ListRow key={n}>
                  <ListCell $first $sel={i === 0}>
                    <Swatch $c={c} $dither={i === 0} />
                    {n}
                  </ListCell>
                  <ListCell $sel={i === 0}>{d}</ListCell>
                  <ListCell $sel={i === 0}>{l}</ListCell>
                  <ListCell $sel={i === 0}>{w}</ListCell>
                  <ListCell $sel={i === 0}>{t}</ListCell>
                  <TrailCell />
                </ListRow>
              ))}
            </ListBody>
          </List>
          <Group>
            <Legend $left={7} $top={-8}>Open (SG1)</Legend>
            <GroupTop>
              <Col $w={211}>
                <FieldRow>
                  <Field $w={68}>
                    <FieldLabel>Color:</FieldLabel>
                    <ColorBtn $w={52} $h={24} $mt={0} $ml={4} $c="#ff8000" $px={3} $py={3} />
                  </Field>
                  <Field $w={143}>
                    <FieldLabel>Draw Style:</FieldLabel>
                    <Combo value="Ignore" />
                  </Field>
                </FieldRow>
                <FieldRow>
                  <Field $w={104}>
                    <FieldLabel>Auto-Coloring:</FieldLabel>
                    <Combo value="None" />
                  </Field>
                  <Field $w={90} $ml={15}>
                    <CheckItem label="Label color" />
                    <ColorBtn $w={24} $h={24} $mt={5} $ml={0} $c="#a0a0a0" $px={3} $py={3} />
                  </Field>
                </FieldRow>
                <FieldRow>
                  <Field $w={211}>
                    <FieldLabel>Short Name:</FieldLabel>
                    <Sunken />
                  </Field>
                </FieldRow>
              </Col>
              <Col $w={111} $ml={13}>
                <Field $w={111}>
                  <FieldLabel $dim>Line Style:</FieldLabel>
                  <Combo dim />
                </Field>
                <Field $w={111}>
                  <FieldLabel $dim>Text to Draw:</FieldLabel>
                  <Sunken $dim />
                </Field>
                <Field $w={111}>
                  <FieldLabel>Displacement:</FieldLabel>
                  <Spin value="0" />
                </Field>
              </Col>
              <Col $w={60} $ml={13}>
                <Field $w={60}>
                  <FieldLabel $dim>Width/Size:</FieldLabel>
                  <Spin value="0" />
                </Field>
              </Col>
              <LabelPanel title="Name Label:" w={130} ml={14} />
              <LabelPanel title="Value Label:" w={131} ml={6} />
            </GroupTop>
            <GroupFoot>
              <CheckItem label="Display Name and Value in Chart Values Windows" on w={378} big />
              <CheckItem label="Display Name and Value in Region Data Line" on big />
            </GroupFoot>
          </Group>
          <Options>
            <OptionRow>
              <CheckItem label="Display Study Name, Subgraph Names and Subgraph Values - Global" on w={468} big />
              <CheckItem label="Use Common Displacement" />
            </OptionRow>
            <OptionRow>
              <CheckItem label="Display Study Name" on w={172} big />
              <CheckItem label="Display Input Values" on w={176} />
              <CheckItem label="Use Chart Graphics Settings For Subgraph Colors" dim big />
            </OptionRow>
            <OptionRow>
              <CheckItem label="Always Show Name and Value Labels When Enabled" on w={355} big />
              <PlainText $w={221}>Transparency Level for Fill Styles:</PlainText>
              <InputBox>75</InputBox>
            </OptionRow>
          </Options>
        </TabPanel>
        <ButtonRow>
          <Btn $w={99} $main>OK</Btn>
          <Btn $w={99}>Cancel</Btn>
          <Btn $w={99}>Apply</Btn>
          <Btn $w={99}>Help</Btn>
          <Btn $w={99}>Description</Btn>
          <Btn $w={115}>Reset Defaults</Btn>
        </ButtonRow>
        <SaveRow>
          <CheckItem label="Save these settings as the default" />
        </SaveRow>
      </Dialog>
      <Highlight />
    </Page>
  );
}
